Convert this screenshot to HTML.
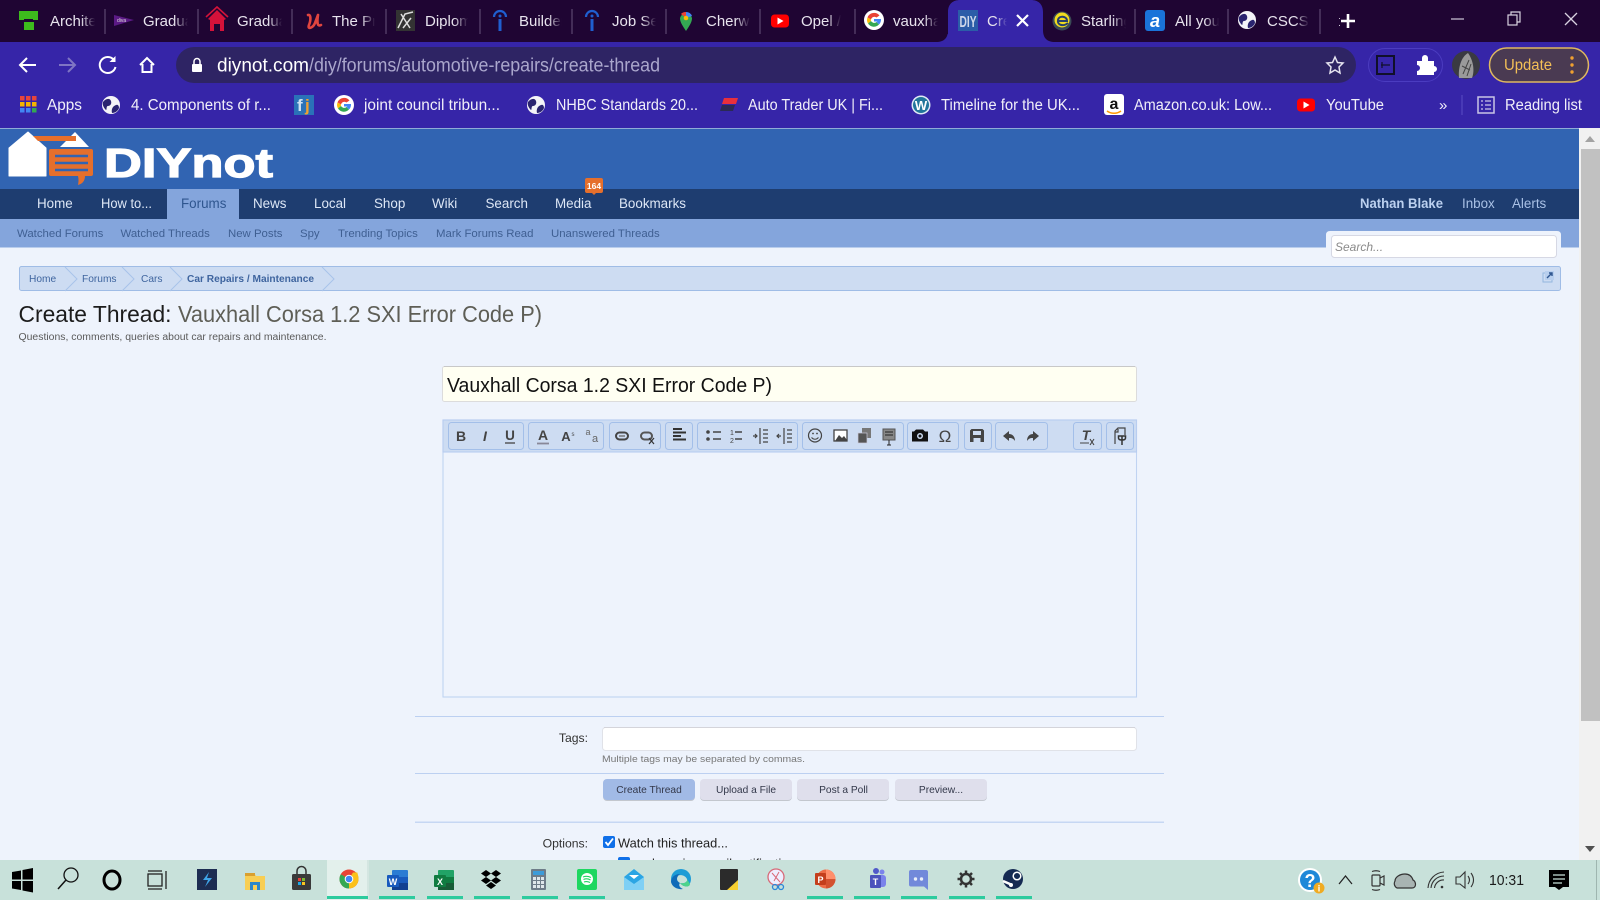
<!DOCTYPE html>
<html lang="en"><head><meta charset="utf-8"><title>Create Thread</title>
<style>
html,body{margin:0;padding:0;width:1600px;height:900px;overflow:hidden;background:#eef3fc}
svg{position:absolute;left:0;top:0;display:block;filter:blur(.35px)}
text{font-family:"Liberation Sans",sans-serif}
.tab{font-size:15px;fill:#e8e4ee}
.bm{font-size:15.5px;fill:#f1eff9}
.nav{font-size:13.4px;fill:#dde7f6}
.sub{font-size:11.4px;fill:#3f5f92}
.bc{font-size:10.2px;fill:#3f659f}
.btn{font-size:10.2px;fill:#33384a;text-anchor:middle}
.lbl{font-size:12.2px;fill:#333}
.edf{fill:#444}
.grp{fill:#cddcf2;stroke:#a3bfe9;stroke-width:1}
</style></head><body>
<svg width="1600" height="900" viewBox="0 0 1600 900" xmlns="http://www.w3.org/2000/svg">
<defs>
<linearGradient id="fd" x1="0" x2="1" y1="0" y2="0"><stop offset="0" stop-color="#1f0533" stop-opacity="0"/><stop offset="1" stop-color="#1f0533"/></linearGradient>
<linearGradient id="fa" x1="0" x2="1" y1="0" y2="0"><stop offset="0" stop-color="#3625a8" stop-opacity="0"/><stop offset="1" stop-color="#3625a8"/></linearGradient>
<g id="globe"><circle r="9" fill="#f4f4f8"/><path d="M-8-3C-5-7-1-7 0-4S-1 1-3 1-4 5-5 5C-7 3-9 0-8-3ZM1 8C0 4 2 1 5 0 7-1 8 1 8 3 7 6 4 8 1 8Z" fill="#2a2470"/></g>
<g id="goog"><circle r="10" fill="#fff"/><path d="M5.500-4.500A7 7 0 0 0-6.500-2.500L-3-.5A3.500 3.500 0 0 1 2.500-2.500Z" fill="#ea4335"/><path d="M-6.500-2.500A7 7 0 0 0-6 3.500L-3 1A3.500 3.500 0 0 1-3-.5Z" fill="#fbbc05"/><path d="M-6 3.500A7 7 0 0 0 5 4.500L2.500 2A3.500 3.500 0 0 1-3 1Z" fill="#34a853"/><path d="M5 4.500A7 7 0 0 0 7-1H0V1.500H3.500A3 3 0 0 1 2.500 2Z" fill="#4285f4"/></g>
<g id="yt"><rect x="-9" y="-6.500" width="18" height="13" rx="3.500" fill="#f00"/><path d="M-2.500-3.500 3.500 0-2.500 3.500Z" fill="#fff"/></g>
</defs>

<!-- tab strip -->
<rect width="1600" height="42" fill="#1f0533"/>
<path d="M936 42C944 42 948 38 948 30V12C948 4 953 0 960 0H1031C1038 0 1043 4 1043 12V30C1043 38 1047 42 1055 42Z" fill="#3625a8"/>
<text class="tab" x="50" y="26">Architects</text>
<text class="tab" x="143" y="26">Graduate</text>
<text class="tab" x="237" y="26">Graduate</text>
<text class="tab" x="332" y="26">The Prince</text>
<text class="tab" x="425" y="26">Diploma</text>
<text class="tab" x="519" y="26">Builders</text>
<text class="tab" x="612" y="26">Job Search</text>
<text class="tab" x="706" y="26">Cherwell</text>
<text class="tab" x="801" y="26">Opel /</text>
<text class="tab" x="893" y="26">vauxhall</text>
<text class="tab" x="987" y="26">Create</text>
<text class="tab" x="1081" y="26">Starling</text>
<text class="tab" x="1175" y="26">All your</text>
<text class="tab" x="1267" y="26">CSCS Test</text>
<!-- tab fades -->
<g fill="url(#fd)">
<rect x="81" y="8" width="14" height="26"/><rect x="174" y="8" width="14" height="26"/><rect x="268" y="8" width="14" height="26"/><rect x="361" y="8" width="14" height="26"/><rect x="454" y="8" width="14" height="26"/><rect x="548" y="8" width="14" height="26"/><rect x="642" y="8" width="14" height="26"/><rect x="736" y="8" width="14" height="26"/><rect x="827" y="8" width="14" height="26"/><rect x="924" y="8" width="14" height="26"/><rect x="1112" y="8" width="14" height="26"/><rect x="1205" y="8" width="14" height="26"/><rect x="1295" y="8" width="14" height="26"/>
</g>
<g fill="#1f0533">
<rect x="95" y="8" width="30" height="26"/><rect x="188" y="8" width="30" height="26"/><rect x="282" y="8" width="28" height="26"/><rect x="375" y="8" width="26" height="26"/><rect x="468" y="8" width="26" height="26"/><rect x="562" y="8" width="26" height="26"/><rect x="656" y="8" width="26" height="26"/><rect x="750" y="8" width="26" height="26"/><rect x="841" y="8" width="22" height="26"/><rect x="938" y="8" width="10" height="26"/><rect x="1126" y="8" width="24" height="26"/><rect x="1219" y="8" width="24" height="26"/><rect x="1309" y="8" width="30" height="26"/>
</g>
<rect x="995" y="8" width="12" height="26" fill="url(#fa)"/><rect x="1007" y="8" width="30" height="26" fill="#3625a8"/>
<path d="M105 9V34M198 9V34M292 9V34M386 9V34M480 9V34M572 9V34M666 9V34M760 9V34M855 9V34M1135 9V34M1228 9V34M1320 9V34" stroke="#5c4870" stroke-width="1.200"/>
<!-- tab favicons -->
<path d="M19 11H38V20H33V19H24V20H19Z" fill="#3dbb1d"/><rect x="24" y="22" width="10" height="8" fill="#3dbb1d"/>
<path d="M114 15 134 20 114 26Z" fill="#5b1a85"/><text x="117" y="22" font-size="5" fill="#ddd">diva</text>
<path d="M217 10 208 19 210 20V31H214V24H220V31H224V20L226 19Z" fill="#d4123a"/><path d="M206 17 217 7 228 17" fill="none" stroke="#d4123a" stroke-width="1.600"/>
<path d="M308 15C311 14 311 20 309 25S313 28 315 23L318 15M318 15C317 22 317 27 321 25" fill="none" stroke="#e0453f" stroke-width="2.600" stroke-linecap="round"/>
<rect x="396" y="10" width="19" height="21" fill="#333"/><path d="M398 28 405 14 413 12M401 14 410 28M403 28 411 18" stroke="#ddd" stroke-width="1.500" fill="none"/>
<g fill="none" stroke="#1f5fd0" stroke-width="2.200"><path d="M494 17A6 6 0 0 1 506 17"/><path d="M500 19V31" stroke-width="3"/></g><circle cx="500" cy="16" r="1.500" fill="#1f5fd0"/>
<g fill="none" stroke="#1f5fd0" stroke-width="2.200"><path d="M586 17A6 6 0 0 1 598 17"/><path d="M592 19V31" stroke-width="3"/></g><circle cx="592" cy="16" r="1.500" fill="#1f5fd0"/>
<path d="M686 31C682 25 680 22 680 18A6.200 6.200 0 0 1 692 18C692 22 690 25 686 31Z" fill="#34a853"/><path d="M681 14A6.200 6.200 0 0 1 686 12V18Z" fill="#ea4335"/><path d="M686 12A6.200 6.200 0 0 1 692 16L686 18Z" fill="#4285f4"/><circle cx="686" cy="18" r="2.300" fill="#fbbc05"/>
<use href="#yt" x="780" y="21"/>
<use href="#goog" x="874" y="20"/>
<rect x="958" y="10" width="20" height="21" fill="#2b5da8"/><text x="968" y="27" font-size="16" font-weight="bold" fill="#cfd9ea" text-anchor="middle" textLength="17" lengthAdjust="spacingAndGlyphs">DIY</text>
<path d="M1017 15 1028 26M1028 15 1017 26" stroke="#fff" stroke-width="2.200"/>
<circle cx="1062" cy="21" r="9.500" fill="#3a4a55"/><circle cx="1062" cy="20" r="7.500" fill="#f1dc1f"/><path d="M1057 21H1067C1067 16 1059 15 1058 20S1063 27 1068 23" fill="none" stroke="#27406b" stroke-width="2"/>
<rect x="1145" y="10" width="20" height="21" rx="3" fill="#1a73d9"/><text x="1155" y="27" font-size="18" font-weight="bold" font-style="italic" fill="#fff" text-anchor="middle">a</text>
<use href="#globe" x="1247" y="20"/>
<path d="M1341 21H1355M1348 14V28" stroke="#fff" stroke-width="2.600"/>
<path d="M1451 19H1464" stroke="#cfc8d8" stroke-width="1.200"/>
<g fill="none" stroke="#d8d2e0" stroke-width="1.200"><rect x="1508" y="15" width="9" height="10"/><path d="M1511 15V12H1520V22H1517"/></g>
<path d="M1565 13 1577 25M1577 13 1565 25" stroke="#d8d2e0" stroke-width="1.300"/>

<!-- toolbar -->
<rect y="42" width="1600" height="86" fill="#3625a8"/>
<rect x="176" y="47" width="1180" height="36" rx="18" fill="#2e2464"/>
<path d="M36 65H20M27 58 20 65 27 72" fill="none" stroke="#fff" stroke-width="2"/>
<path d="M59 65H75M68 58 75 65 68 72" fill="none" stroke="#7f75c4" stroke-width="2"/>
<path d="M114 60A8 8 0 1 0 115.500 67" fill="none" stroke="#fff" stroke-width="2"/><path d="M115.500 56V62H109.500Z" fill="#fff"/>
<path d="M140 65 147 58 154 65M142.500 64V72H151.500V64" fill="none" stroke="#fff" stroke-width="2"/>
<rect x="192" y="64" width="10" height="8" rx="1" fill="#fff"/><path d="M194 64V61.500A3 3 0 0 1 200 61.500V64" fill="none" stroke="#fff" stroke-width="1.500"/>
<text x="217" y="71.500" font-size="19" fill="#fff" textLength="92" lengthAdjust="spacingAndGlyphs">diynot.com</text>
<text x="309" y="71.500" font-size="19" fill="#aaa6cc" textLength="351" lengthAdjust="spacingAndGlyphs">/diy/forums/automotive-repairs/create-thread</text>
<path d="M1335 57 1337.500 62.500 1343 63 1339 67 1340 73 1335 70 1330 73 1331 67 1327 63 1332.500 62.500Z" fill="none" stroke="#e6e4ef" stroke-width="1.500"/>
<rect x="1368.500" y="48.500" width="74" height="33" rx="16.500" fill="none" stroke="#4b3cc0"/>
<rect x="1377" y="56" width="17" height="18" fill="none" stroke="#10102a" stroke-width="2"/><path d="M1381 65H1390M1382 62V68" stroke="#10102a" stroke-width="1.200"/>
<path d="M1417 61H1422V58A3 3 0 0 1 1428 58V61H1434V66A3 3 0 0 1 1434 72V75H1417V71A3 3 0 0 0 1417 65Z" fill="#fff"/>
<ellipse cx="1466" cy="65" rx="14" ry="14" fill="#3a3a42"/><path d="M1459 78C1458 68 1461 57 1468 53 1473 60 1475 70 1472 78Z" fill="#9a9a9a"/><path d="M1463 74 1469 60M1467 76 1471 64M1462 66 1470 70" stroke="#444" stroke-width="1"/>
<rect x="1489.500" y="48" width="99" height="34" rx="17" fill="#4a3a52" stroke="#dfb860" stroke-width="1.500"/>
<text x="1504" y="70" font-size="15.500" fill="#f3bf57" textLength="48" lengthAdjust="spacingAndGlyphs">Update</text>
<circle cx="1572" cy="58" r="1.700" fill="#f0a030"/><circle cx="1572" cy="65" r="1.700" fill="#f0a030"/><circle cx="1572" cy="72" r="1.700" fill="#f0a030"/>

<!-- bookmarks -->
<g fill="#e8453c"><rect x="20" y="96" width="4.500" height="4.500"/><rect x="26" y="96" width="4.500" height="4.500"/><rect x="32" y="96" width="4.500" height="4.500"/></g>
<g fill="#f5b400"><rect x="20" y="102" width="4.500" height="4.500"/><rect x="26" y="102" width="4.500" height="4.500"/><rect x="32" y="102" width="4.500" height="4.500"/></g>
<g fill="#4285f4"><rect x="20" y="108" width="4.500" height="4.500"/><rect x="26" y="108" width="4.500" height="4.500"/></g><rect x="32" y="108" width="4.500" height="4.500" fill="#34a853"/>
<text class="bm" x="47" y="110" textLength="35" lengthAdjust="spacingAndGlyphs">Apps</text>
<use href="#globe" x="111" y="105"/>
<text class="bm" x="131" y="110" textLength="140" lengthAdjust="spacingAndGlyphs">4. Components of r...</text>
<rect x="294" y="95" width="20" height="20" fill="#2a72b8"/><text x="297" y="111" font-size="17" font-weight="bold" fill="#cfe1f3">f</text><text x="305" y="111" font-size="17" font-weight="bold" fill="#f0a030">j</text>
<use href="#goog" x="344" y="105"/>
<text class="bm" x="364" y="110" textLength="136" lengthAdjust="spacingAndGlyphs">joint council tribun...</text>
<use href="#globe" x="536" y="105"/>
<text class="bm" x="556" y="110" textLength="142" lengthAdjust="spacingAndGlyphs">NHBC Standards 20...</text>
<path d="M724 98H738L736 104H722Z" fill="#e8303c"/><path d="M722 105H735L733 111H720Z" fill="#2a2a55"/>
<text class="bm" x="748" y="110" textLength="135" lengthAdjust="spacingAndGlyphs">Auto Trader UK | Fi...</text>
<circle cx="921" cy="105" r="9.500" fill="#dfe8f5"/><circle cx="921" cy="105" r="8" fill="#21759b"/><text x="921" y="110" font-size="13" font-weight="bold" fill="#fff" text-anchor="middle" font-family="Liberation Serif,serif">W</text>
<text class="bm" x="941" y="110" textLength="139" lengthAdjust="spacingAndGlyphs">Timeline for the UK...</text>
<rect x="1104" y="94" width="20" height="21" rx="3" fill="#fff"/><text x="1114" y="109" font-size="16" font-weight="bold" fill="#111" text-anchor="middle">a</text><path d="M1107 111C1111 114 1117 114 1121 111" stroke="#f90" stroke-width="1.500" fill="none"/>
<text class="bm" x="1134" y="110" textLength="138" lengthAdjust="spacingAndGlyphs">Amazon.co.uk: Low...</text>
<use href="#yt" x="1306" y="105"/>
<text class="bm" x="1326" y="110" textLength="58" lengthAdjust="spacingAndGlyphs">YouTube</text>
<text x="1439" y="110" font-size="15" fill="#f1eff9">»</text>
<path d="M1462 95V115" stroke="#5b4dc4"/>
<rect x="1478" y="97" width="16" height="16" fill="none" stroke="#c9c5e6" stroke-width="1.500"/><path d="M1481 101H1483M1485 101H1491M1481 105H1483M1485 105H1491M1481 109H1483M1485 109H1491" stroke="#c9c5e6" stroke-width="1.300"/>
<text class="bm" x="1505" y="110" textLength="77" lengthAdjust="spacingAndGlyphs">Reading list</text>

<!-- site header -->
<rect y="128.500" width="1579" height="61" fill="#3164b2"/>
<path d="M9 148 28 132 46 148V176H9Z" fill="#fff" stroke="#fff" stroke-width="1" stroke-linejoin="round"/>
<path d="M60 147 75 132 89 147Z" fill="#fff"/>
<path d="M33 136H76V141H38Z" fill="#e56f2c"/>
<path d="M49 151Q49 149 51 149H91Q93 149 93 151V174Q93 176 91 176H85Q85 183 78 185 79 180 78 176H51Q49 176 49 174Z" fill="#e56f2c"/>
<g stroke="#3164b2" stroke-width="2.600"><path d="M55 156H88M55 163H88M55 170H88"/></g>
<text x="104" y="177" font-size="41" font-weight="bold" fill="#fff" stroke="#fff" stroke-width="1.200" textLength="169" lengthAdjust="spacingAndGlyphs">DIYnot</text>

<!-- nav -->
<rect y="189" width="1579" height="30" fill="#1e3d70"/>
<rect x="167" y="189" width="72" height="30" fill="#84a5dc"/>
<rect y="219" width="1579" height="28" fill="#84a5dc"/>
<rect y="247" width="1579" height="1" fill="#b9cdec"/>
<text class="nav" x="37" y="208">Home</text>
<text class="nav" x="101" y="208" textLength="51" lengthAdjust="spacingAndGlyphs">How to...</text>
<text class="nav" x="181" y="208" style="fill:#2f568f">Forums</text>
<text class="nav" x="253" y="208">News</text>
<text class="nav" x="314" y="208">Local</text>
<text class="nav" x="374" y="208">Shop</text>
<text class="nav" x="432" y="208">Wiki</text>
<text class="nav" x="485.500" y="208">Search</text>
<text class="nav" x="555" y="208">Media</text>
<text class="nav" x="619" y="208">Bookmarks</text>
<path d="M587 178H601Q603 178 603 180V191Q603 193 601 193H596L594 195 592 193H587Q585 193 585 191V180Q585 178 587 178Z" fill="#e56f2c"/>
<text x="594" y="189" font-size="8.500" font-weight="bold" fill="#fff" text-anchor="middle">164</text>
<text x="1360" y="208" font-size="14" font-weight="bold" fill="#bcd1f0" textLength="83" lengthAdjust="spacingAndGlyphs">Nathan Blake</text>
<text x="1462" y="208" font-size="13.400" fill="#a9c1e6">Inbox</text>
<text x="1512" y="208" font-size="13.400" fill="#a9c1e6">Alerts</text>
<text class="sub" x="17" y="237">Watched Forums</text>
<text class="sub" x="120.500" y="237">Watched Threads</text>
<text class="sub" x="228" y="237">New Posts</text>
<text class="sub" x="300" y="237">Spy</text>
<text class="sub" x="338" y="237">Trending Topics</text>
<text class="sub" x="436" y="237">Mark Forums Read</text>
<text class="sub" x="551" y="237">Unanswered Threads</text>

<!-- search -->
<path d="M1326 248V235Q1326 231 1330 231H1557Q1561 231 1561 235V248Z" fill="#eef3fc"/>
<rect x="1331.500" y="235.500" width="225" height="22" rx="3" fill="#fff" stroke="#d6d8e4"/>
<text x="1335" y="251" font-size="12" font-style="italic" fill="#8a8a8a">Search...</text>

<!-- breadcrumb -->
<rect x="19.500" y="266.500" width="1541" height="24" rx="2" fill="#cddcf2" stroke="#9fbce6"/>
<g fill="none" stroke="#a8c3ea"><path d="M65 267 77 279 65 291M122 267 134 279 122 291M170 267 182 279 170 291M322 267 334 279 322 291"/></g>
<text class="bc" x="29" y="282">Home</text>
<text class="bc" x="82" y="282">Forums</text>
<text class="bc" x="141" y="282">Cars</text>
<text class="bc" x="187" y="282" font-weight="bold" textLength="127" lengthAdjust="spacingAndGlyphs">Car Repairs / Maintenance</text>
<rect x="1543" y="273" width="9" height="9" fill="none" stroke="#94b6de"/>
<rect x="1545" y="271" width="9" height="9" fill="#b8cfee"/>
<path d="M1547 278 1552 273M1549 273H1552V276" stroke="#2f568f" stroke-width="1.400" fill="none"/>

<!-- title -->
<text x="18.500" y="322" font-size="23" fill="#1c1c1c" textLength="153" lengthAdjust="spacingAndGlyphs">Create Thread:</text>
<text x="178" y="322" font-size="23" fill="#5e5e56" textLength="364" lengthAdjust="spacingAndGlyphs">Vauxhall Corsa 1.2 SXI Error Code P)</text>
<text x="18.500" y="340" font-size="10" fill="#5a5a5a" textLength="308" lengthAdjust="spacingAndGlyphs">Questions, comments, queries about car repairs and maintenance.</text>

<!-- title input -->
<rect x="442.500" y="366.500" width="694" height="35" rx="2" fill="#fffff2" stroke="#dcdcdc"/>
<path d="M444 366.500H1135" stroke="#c8c8c8"/>
<text x="447" y="392" font-size="20" fill="#111" textLength="325" lengthAdjust="spacingAndGlyphs">Vauxhall Corsa 1.2 SXI Error Code P)</text>

<!-- editor -->
<rect x="443" y="420" width="693.500" height="277" fill="#eef3fc" stroke="#c0d3f2" stroke-width="1.100"/>
<rect x="443" y="420" width="693.500" height="32" fill="#cddcf2" stroke="#b8cdf0" stroke-width="1.100"/>
<g class="grp">
<rect class="grp" x="448.500" y="422.500" width="75" height="27" rx="3"/>
<rect class="grp" x="528.500" y="422.500" width="75" height="27" rx="3"/>
<rect class="grp" x="609.500" y="422.500" width="51" height="27" rx="3"/>
<rect class="grp" x="665.500" y="422.500" width="27" height="27" rx="3"/>
<rect class="grp" x="697.500" y="422.500" width="100" height="27" rx="3"/>
<rect class="grp" x="802.500" y="422.500" width="101" height="27" rx="3"/>
<rect class="grp" x="907.500" y="422.500" width="51" height="27" rx="3"/>
<rect class="grp" x="964.500" y="422.500" width="27" height="27" rx="3"/>
<rect class="grp" x="995.500" y="422.500" width="52" height="27" rx="3"/>
<rect class="grp" x="1073.500" y="422.500" width="28" height="27" rx="3"/>
<rect class="grp" x="1106.500" y="422.500" width="27" height="27" rx="3"/>
</g>
<text x="461" y="441" font-size="14" font-weight="bold" fill="#444" text-anchor="middle">B</text>
<text x="485" y="441" font-size="14" font-weight="bold" font-style="italic" fill="#444" text-anchor="middle">I</text>
<text x="510" y="440" font-size="13.500" font-weight="bold" fill="#444" text-anchor="middle">U</text><path d="M505 443H515" stroke="#444" stroke-width="1.300"/>
<text x="543" y="440" font-size="14" font-weight="bold" fill="#444" text-anchor="middle">A</text><path d="M537 443.500H549" stroke="#889" stroke-width="1.800"/>
<text x="566" y="441" font-size="13" font-weight="bold" fill="#444" text-anchor="middle">A</text><text x="573" y="436" font-size="6" fill="#444" text-anchor="middle">s</text>
<text x="588" y="435" font-size="9" fill="#666" text-anchor="middle">a</text><text x="595" y="442" font-size="11" fill="#666" text-anchor="middle">a</text>
<rect x="616" y="432.500" width="12" height="7" rx="3.500" fill="none" stroke="#444" stroke-width="2"/><path d="M619 436H625" stroke="#777" stroke-width="1.500"/>
<rect x="641" y="432.500" width="11" height="7" rx="3.500" fill="none" stroke="#555" stroke-width="2"/><path d="M649 438 654 444M654 438 649 444" stroke="#333" stroke-width="1.200"/>
<path d="M673 429H682M673 432.500H686M673 436H681M673 439.500H686" stroke="#333" stroke-width="2"/>
<g stroke="#444" stroke-width="1.500"><path d="M713 432H721M713 439H721"/></g><circle cx="708" cy="432" r="1.800" fill="#444"/><circle cx="708" cy="439" r="1.800" fill="#444"/>
<text x="730" y="435" font-size="7" fill="#444">1</text><text x="730" y="443" font-size="7" fill="#444">2</text><path d="M735 432H742M735 439H742" stroke="#444" stroke-width="1.500"/>
<path d="M760 428V444M763 430H768M763 434H768M763 438H768M763 442H768M753 436H757M755 434 757 436 755 438" stroke="#444" stroke-width="1.200" fill="none"/>
<path d="M784 428V444M787 430H792M787 434H792M787 438H792M787 442H792M777 436H781M779 434 777 436 779 438" stroke="#444" stroke-width="1.200" fill="none"/>
<circle cx="815" cy="435.500" r="6.500" fill="none" stroke="#444" stroke-width="1.200"/><circle cx="813" cy="433.500" r=".9" fill="#444"/><circle cx="817" cy="433.500" r=".9" fill="#444"/><path d="M811.500 437.500Q815 441 818.500 437.500" fill="none" stroke="#444"/>
<rect x="834" y="430" width="13" height="11" fill="#fff" stroke="#444" stroke-width="1.300"/><path d="M835 441 839 435 842 438 844 436 847 440V441Z" fill="#444"/>
<rect x="862" y="428" width="9" height="10" fill="#777"/><rect x="858" y="433" width="9" height="10" fill="#555" stroke="#ccd" stroke-width=".7"/>
<rect x="883" y="429" width="12" height="11" fill="#888" stroke="#555"/><path d="M885 432H893M885 435H893M889 440V445M887 445H891" stroke="#222"/>
<path d="M914 431.500 916 429.500H923L925 431.500H928V441.500H912V431.500Z" fill="#111"/><circle cx="920" cy="436" r="3" fill="#cddcf2"/><circle cx="920" cy="436" r="1.500" fill="#111"/>
<text x="945" y="442" font-size="17" fill="#444" text-anchor="middle">Ω</text>
<path d="M971.500 429H982.500L984 430.500V442H970V430.500Z" fill="#444"/><rect x="973" y="431" width="8" height="4" fill="#cddcf2"/><rect x="973.500" y="438" width="7" height="4" fill="#cddcf2"/>
<path d="M1003 436 1009 431V434C1012 434 1015 436 1015 441 1013 438 1011 438 1009 438V441Z" fill="#444"/>
<path d="M1039 436 1033 431V434C1030 434 1027 436 1027 441 1029 438 1031 438 1033 438V441Z" fill="#444"/>
<text x="1086" y="440" font-size="14" font-weight="bold" font-style="italic" fill="#444" text-anchor="middle">T</text><path d="M1080 443H1089" stroke="#444"/><path d="M1090 439 1094 445M1094 439 1090 445" stroke="#444" stroke-width="1.100"/>
<path d="M1115 444V431L1118 428H1125V435M1118 429V432H1115" fill="none" stroke="#444" stroke-width="1.200"/><path d="M1122 436V441M1118.500 436H1125.500V438Q1125.500 440 1122 440 1118.500 440 1118.500 438ZM1122 440V445" fill="none" stroke="#333" stroke-width="1.500"/>

<!-- form -->
<rect x="415" y="716" width="749" height="1" fill="#bcd0f1"/>
<text class="lbl" x="588" y="742" text-anchor="end">Tags:</text>
<rect x="602.500" y="727.500" width="534" height="23" rx="3" fill="#fff" stroke="#e0e2e8"/>
<path d="M604 727.500H1135" stroke="#d4d4da"/>
<text x="602" y="762" font-size="9.500" fill="#777" textLength="203" lengthAdjust="spacingAndGlyphs">Multiple tags may be separated by commas.</text>
<rect x="415" y="773" width="749" height="1" fill="#bcd0f1"/>
<g fill="#000" opacity=".18"><rect x="603" y="780" width="92" height="21" rx="4"/><rect x="700" y="780" width="92" height="21" rx="4"/><rect x="797" y="780" width="92" height="21" rx="4"/><rect x="895" y="780" width="92" height="21" rx="4"/></g>
<rect x="603" y="779" width="92" height="21" rx="4" fill="#a1bae6"/>
<rect x="700" y="779" width="92" height="21" rx="4" fill="#dfdfec"/>
<rect x="797" y="779" width="92" height="21" rx="4" fill="#dfdfec"/>
<rect x="895" y="779" width="92" height="21" rx="4" fill="#dfdfec"/>
<text class="btn" x="649" y="793">Create Thread</text>
<text class="btn" x="746" y="793">Upload a File</text>
<text class="btn" x="843.500" y="793">Post a Poll</text>
<text class="btn" x="941" y="793">Preview...</text>
<rect x="415" y="821.500" width="749" height="1.500" fill="#c6d7f3"/>
<text class="lbl" x="588" y="847.500" text-anchor="end">Options:</text>
<rect x="603" y="836" width="12" height="12" rx="2" fill="#0f6fe8"/><path d="M605.500 842 608 845 613 838.500" stroke="#fff" stroke-width="1.800" fill="none"/>
<text x="618" y="847.500" font-size="12.500" fill="#222" textLength="110" lengthAdjust="spacingAndGlyphs">Watch this thread...</text>
<rect x="618" y="857" width="12" height="12" rx="2" fill="#0f6fe8"/>
<text x="634" y="868" font-size="12.500" fill="#222">and receive email notifications</text>

<!-- scrollbar -->
<rect x="1579" y="128" width="21" height="732" fill="#f1f1f1"/>
<rect x="1581" y="149" width="19" height="572" fill="#c1c1c1"/>
<path d="M1585 142 1590 136 1595 142Z" fill="#a3a3a3"/>
<path d="M1585 846 1590 852 1595 846Z" fill="#505050"/>

<!-- taskbar -->
<rect y="860" width="1600" height="40" fill="#c8e1da"/>
<rect x="327" y="860" width="40" height="40" fill="#e3f0ec"/>
<rect x="367" y="860" width="2" height="40" fill="#d4e6e1"/>
<g fill="#2dcb9e"><rect x="327" y="896" width="41" height="3"/><rect x="379" y="896" width="36" height="3"/><rect x="427" y="896" width="36" height="3"/><rect x="474" y="896" width="36" height="3"/><rect x="522" y="896" width="36" height="3"/><rect x="569" y="896" width="36" height="3"/><rect x="807" y="896" width="36" height="3"/><rect x="854" y="896" width="36" height="3"/><rect x="901" y="896" width="36" height="3"/><rect x="949" y="896" width="36" height="3"/><rect x="996" y="896" width="36" height="3"/></g>
<!-- windows -->
<path d="M12 872 21 870.500V879.500H12ZM22.500 870 33 868V879.500H22.500ZM12 881H21V890L12 888.500ZM22.500 881H33V892.500L22.500 890.500Z" fill="#000"/>
<circle cx="71" cy="875" r="7" fill="none" stroke="#111" stroke-width="1.300"/><path d="M66 880 58 889" stroke="#111" stroke-width="1.500"/>
<ellipse cx="112" cy="880" rx="8" ry="9" fill="none" stroke="#000" stroke-width="3"/>
<g fill="none" stroke="#222" stroke-width="1.300"><rect x="148" y="874" width="14" height="12"/><path d="M148 871H162M148 889H162M166 871V889"/></g>
<rect x="197" y="869" width="20" height="21" fill="#1d2d52"/><path d="M209 872 203 880H208L205 887 212 878H207Z" fill="#3fa5e8"/>
<path d="M245 873H254L256 876H265V890H245Z" fill="#f8ce53"/><rect x="245" y="873" width="10" height="3" fill="#d9a030"/><rect x="250" y="882" width="10" height="8" fill="#2b87c9"/><rect x="253" y="885" width="4" height="5" fill="#f8ce53"/>
<rect x="292" y="874" width="19" height="16" rx="1.500" fill="#3a3a3a"/><path d="M297 874V871A4.500 4.500 0 0 1 306 871V874" fill="none" stroke="#333" stroke-width="1.500"/><rect x="298" y="878" width="3" height="3" fill="#e8403c"/><rect x="302" y="878" width="3" height="3" fill="#7cb82f"/><rect x="298" y="882" width="3" height="3" fill="#1fa8e8"/><rect x="302" y="882" width="3" height="3" fill="#f8c520"/>
<!-- chrome -->
<circle cx="349" cy="879" r="9.500" fill="#e94335"/><path d="M349 888.500A9.500 9.500 0 0 1 340.800 874.200L349 879Z" fill="#34a853"/><path d="M358.500 879A9.500 9.500 0 0 1 349 888.500L349 879 353 872.500H357.300Q358.500 876 358.500 879Z" fill="#fbc11a"/><circle cx="349" cy="879" r="4.300" fill="#fff"/><circle cx="349" cy="879" r="3.300" fill="#4285f4"/>
<!-- word -->
<rect x="392" y="870" width="16" height="20" rx="1" fill="#2b7cd3"/><rect x="392" y="877" width="16" height="6" fill="#185abd"/><rect x="392" y="883" width="16" height="7" fill="#103f91"/><rect x="387" y="875" width="12" height="12" rx="1" fill="#185abd"/><text x="393" y="885" font-size="9" font-weight="bold" fill="#fff" text-anchor="middle">W</text>
<!-- excel -->
<rect x="438" y="870" width="16" height="20" rx="1" fill="#21a366"/><rect x="438" y="877" width="16" height="6" fill="#107c41"/><rect x="438" y="883" width="16" height="7" fill="#185c37"/><rect x="434" y="875" width="12" height="12" rx="1" fill="#107c41"/><text x="440" y="885" font-size="9" font-weight="bold" fill="#fff" text-anchor="middle">X</text>
<!-- dropbox -->
<path d="M486 870 491 873.500 486 877 481 873.500ZM496 870 501 873.500 496 877 491 873.500ZM486 877 491 880.500 486 884 481 880.500ZM496 877 501 880.500 496 884 491 880.500ZM491 882 496 885.500 491 889 486 885.500Z" fill="#000"/>
<!-- calc -->
<rect x="531" y="869" width="15" height="21" rx="1" fill="#6e7c88"/><rect x="533" y="871" width="11" height="4" fill="#3d9bd8"/><g fill="#dfe6ea"><rect x="533" y="877" width="3" height="3"/><rect x="537" y="877" width="3" height="3"/><rect x="541" y="877" width="3" height="3"/><rect x="533" y="881" width="3" height="3"/><rect x="537" y="881" width="3" height="3"/><rect x="541" y="881" width="3" height="3"/><rect x="533" y="885" width="3" height="3"/><rect x="537" y="885" width="3" height="3"/><rect x="541" y="885" width="3" height="3"/></g>
<!-- spotify -->
<rect x="577" y="869" width="20" height="21" rx="2" fill="#1ed760"/><circle cx="587" cy="879" r="6" fill="#fff"/><path d="M583 877Q587 875.500 591 877.500M583.500 879.500Q587 878 590.500 880M584 882Q587 881 590 882.500" stroke="#1ed760" stroke-width="1.100" fill="none"/>
<!-- mail -->
<path d="M624 877 634 869 644 877V890H624Z" fill="#2ba5e4"/><path d="M624 877 634 884 644 877V890H624Z" fill="#7fd0f5"/><path d="M629 875H639L634 879Z" fill="#fff"/>
<!-- edge -->
<circle cx="681" cy="879" r="10" fill="#1d9cd6"/><path d="M671 882C674 874 684 873 687 879 688 882 684 884 680 883 684 888 690 887 690 884 688 889 683 890 679 889 675 888 672 886 671 882Z" fill="#c8e1da"/><path d="M680 883C676 881 676 877 680 874 674 874 671 878 671 882 672 887 678 890 683 889 680 888 678 885 680 883Z" fill="#0f6bb8"/><path d="M687 879C688 882 684 884 680 883 684 888 690 887 690 884Z" fill="#4dd38b"/>
<!-- sticky -->
<rect x="720" y="869" width="18" height="21" rx="1" fill="#2b2b2b"/><path d="M738 880V890H727Z" fill="#f8d030"/>
<!-- snip -->
<circle cx="776" cy="877" r="8" fill="#eef" stroke="#d86a78" stroke-width="1.300"/><path d="M772 873 780 882M779 872 774 881" stroke="#d86a78" stroke-width="1"/><circle cx="781" cy="887" r="2.500" fill="none" stroke="#2b87d8" stroke-width="1.300"/><circle cx="775" cy="887" r="2.500" fill="none" stroke="#2b87d8" stroke-width="1.300"/>
<!-- ppt -->
<circle cx="826" cy="879" r="9.500" fill="#ed6c47"/><path d="M826 869.500A9.500 9.500 0 0 1 835.500 879H826Z" fill="#ff8f6b"/><path d="M826 888.500A9.500 9.500 0 0 0 835.500 879H826Z" fill="#d35230"/><rect x="815" y="873" width="11" height="12" rx="1" fill="#c43e1c"/><text x="820.500" y="883" font-size="9" font-weight="bold" fill="#fff" text-anchor="middle">P</text>
<!-- teams -->
<circle cx="882" cy="872" r="2.500" fill="#7b83eb"/><rect x="876" y="875" width="10" height="12" rx="3" fill="#7b83eb"/><circle cx="876" cy="871" r="3" fill="#5059c9"/><rect x="870" y="875" width="11" height="13" rx="1" fill="#4b53bc"/><text x="875.500" y="885" font-size="9" font-weight="bold" fill="#fff" text-anchor="middle">T</text>
<!-- discord -->
<path d="M911 870H926Q928 870 928 872V890L924 886.500H911Q909 886.500 909 884.500V872Q909 870 911 870Z" fill="#7289da"/><circle cx="915.500" cy="879" r="1.700" fill="#e9edf8"/><circle cx="921.500" cy="879" r="1.700" fill="#e9edf8"/>
<!-- settings -->
<circle cx="966" cy="879" r="5" fill="none" stroke="#333" stroke-width="2.500"/><path d="M966 870.500V873M966 885V887.500M957.500 879H960M972 879H974.500M960 873 961.700 874.700M970.300 883.300 972 885M972 873 970.300 874.700M961.700 883.300 960 885" stroke="#333" stroke-width="2.500"/>
<!-- steam -->
<circle cx="1013" cy="879" r="10" fill="#152a52"/><path d="M1003 881 1011 884.500" stroke="#fff" stroke-width="2.500"/><circle cx="1017" cy="876" r="3.800" fill="none" stroke="#fff" stroke-width="1.500"/><circle cx="1011" cy="885" r="2" fill="#fff"/>
<!-- tray -->
<circle cx="1310" cy="880" r="12" fill="#fff"/><circle cx="1310" cy="880" r="10" fill="#1e88d8"/><text x="1310" y="887" font-size="18" font-weight="bold" fill="#fff" text-anchor="middle">?</text><circle cx="1319" cy="888" r="5.500" fill="#f0ab22"/><text x="1319" y="891.500" font-size="9" font-weight="bold" fill="#fff" text-anchor="middle">i</text>
<path d="M1339 884 1345.500 876 1352 884" fill="none" stroke="#222" stroke-width="1.200"/>
<g fill="none" stroke="#333" stroke-width="1.200"><rect x="1372" y="875" width="8" height="11" rx="1"/><path d="M1380 878 1384 876V885L1380 883M1372 871.500Q1376 870 1380 871.500M1372 889.500Q1376 891 1380 889.500"/></g>
<path d="M1397 888A5 5 0 0 1 1395 881C1395 877 1400 874 1405 874 1410 874 1412 877 1413 880 1416 881 1417 888 1412 888Z" fill="#a8b4b2" stroke="#333" stroke-width="1.200"/>
<g fill="none" stroke="#333" stroke-width="1.100"><path d="M1428 888A17 17 0 0 1 1444 872M1431 888A13 13 0 0 1 1444 876M1434.500 888A9 9 0 0 1 1444 880"/></g><circle cx="1442" cy="887" r="1.300" fill="#333"/>
<path d="M1456 877H1460L1465 872V888L1460 884H1456ZM1468 876Q1471 880 1468 884M1471 873Q1476 880 1471 887" fill="none" stroke="#333" stroke-width="1.100"/>
<text x="1489" y="885" font-size="14.500" fill="#1b1b1b" textLength="35" lengthAdjust="spacingAndGlyphs">10:31</text>
<path d="M1549 870H1569V887H1563L1559 890 1555 887H1549Z" fill="#000"/><path d="M1553 875H1565M1553 879H1565M1553 883H1562" stroke="#c8e1da" stroke-width="1.200"/>
<rect x="1596" y="860" width="1" height="40" fill="#9fb6b0"/>
</svg>
</body></html>
